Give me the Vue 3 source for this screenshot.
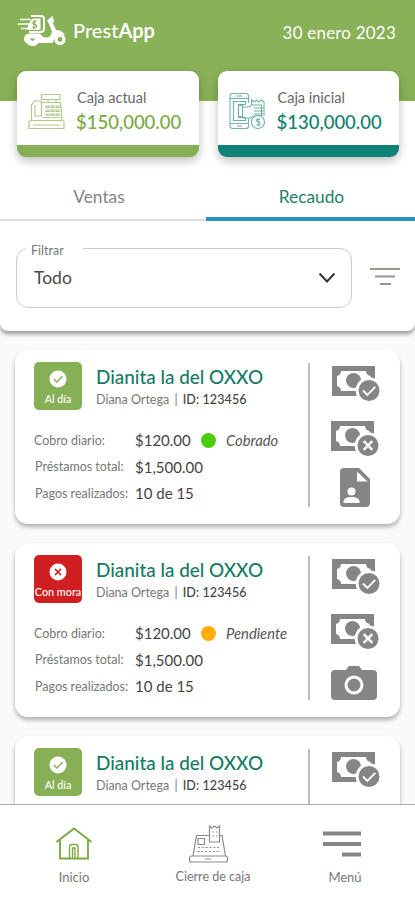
<script setup>
import { ref } from 'vue'

// Active tab and selected filter
const activeTab = ref('Recaudo')
const filter = ref('Todo')

// Clients shown in the list
// A client without rows is only peeking out above the bottom bar
const clients = ref([
  { key: 1, late: false, badge: 'Al día', status: 'Cobrado', action: 'file', rows: true },
  { key: 2, late: true, badge: 'Con mora', status: 'Pendiente', action: 'camera', rows: true },
  { key: 3, late: false, badge: 'Al día', status: 'Cobrado', action: 'file', rows: false }
])
</script>

<template>
  <div class="app">
    <!-- Green header -->
    <header class="header">
      <div class="brand">
        <svg class="scooter" width="50" height="34" viewBox="0 0 50 34" fill="none" stroke="#fff">
          <path d="M3 6.500h11M1 11h11M4 15.500h8" stroke-width="1.600" />
          <path d="M14 3h10q3 0 3 3v10q0 3-3 3H12" stroke-width="1.800" />
          <path d="M16 5.500h7.500v11.500H10.500q0-7 5.500-11.500z" fill="#fff" stroke="none" />
          <path d="M19.300 8.500q-3-1-3.300 1t2 2.200 1.200 2.500q-1.300 1-3.500 0M18 7l-1.500 9" stroke="#87b056" stroke-width="1.200" />
          <path d="M30 7.500l5.500-4.500 1.500 5-1 2 3 7q6 0 9 5l-5-.500q-6 1-7 8.500H9q-3-3-1.500-6.500Q9 20.500 13 20.500h9q2 0 3 2.500 1 1.500 4 1.500 4 0 5-3l1-3-3.500-8.500z" fill="#fff" stroke="none" />
          <path d="M10.500 28a5 3.600 0 0 0 10 0" stroke-width="3" />
          <path d="M12.500 25.500h6l-3 2.700z" fill="#87b056" stroke="none" />
          <circle cx="43" cy="26.500" r="4" fill="#87b056" stroke-width="3.200" />
        </svg>
        <h1 class="name">Prest<b>App</b></h1>
      </div>
      <span class="date">30 enero 2023</span>
    </header>

    <!-- Cash summary -->
    <section class="summary">
      <div class="cash green">
        <svg width="37" height="37" viewBox="0 0 37 37" fill="none" stroke="currentColor" stroke-width="1.200">
          <path d="M13.500 1.500h18.500v5h-18.500zM20 6.500v3M28 6.500v3" />
          <path d="M13 9.500h19.500l1.500 18H3.500V12l3-4h6.500z" />
          <path d="M7 12v11h6.500V9.500M15 24.500h17" />
          <path d="M18 13h3v1.500h-3zM23 13h3v1.500h-3zM28 13h3v1.500h-3zM18 17h3v1.500h-3zM23 17h3v1.500h-3zM28 17h3v1.500h-3zM18 21h3v1.500h-3zM23 21h3v1.500h-3zM28 21h3v1.500h-3z" />
          <path d="M1 29.500q0-2 2-2h31q2 0 2 2v6H1zM5 32h27" />
        </svg>
        <div>
          <p class="cash-label">Caja actual</p>
          <p class="cash-value">$150,000.00</p>
        </div>
      </div>
      <div class="cash teal">
        <svg width="37" height="37" viewBox="0 0 37 37" fill="none" stroke="currentColor" stroke-width="1.100">
          <path d="M19.500 10V3q0-2.500-2.500-2.500H3.500Q1 .500 1 3v30q0 2.500 2.500 2.500H17q2.500 0 2.500-2.500v-7" />
          <path d="M1 5.500h18.500M1 30.500h18.500M7 3h6M8 33h5M4.500 8.500h12v3h-7v13h7v3h-12z" />
          <path d="M9.500 12.500h4v11h-4zM13.500 14h6l4-2h9v11h-8l-3 2h-8" />
          <path d="M22.500 12V7l2.500 2 2.500-2 2.500 2 2.500-2 2.500 2v14M25 15h9M25 18h9M25 21h9" />
          <circle cx="29" cy="29" r="6.500" fill="#fff" />
          <path d="M31 26.500q-3.500-1-3.500.700t2 1.500 1.500 2.300-3.500.700M29.200 25v8" />
        </svg>
        <div>
          <p class="cash-label">Caja inicial</p>
          <p class="cash-value">$130,000.00</p>
        </div>
      </div>
    </section>

    <!-- Tabs and filter -->
    <section class="panel">
      <nav class="tabs">
        <a class="tab" :class="{ active: activeTab === 'Ventas' }" @click="activeTab = 'Ventas'">Ventas</a>
        <a class="tab" :class="{ active: activeTab === 'Recaudo' }" @click="activeTab = 'Recaudo'">Recaudo</a>
      </nav>
      <div class="filter-row">
        <div class="select">
          <span class="legend">Filtrar</span>
          <span class="selected">{{ filter }}</span>
          <svg width="18" height="12" viewBox="0 0 18 12" fill="none" stroke="#333" stroke-width="2">
            <path d="M1.500 1.500l7.500 8 7.500-8" />
          </svg>
        </div>
        <svg width="30" height="20" viewBox="0 0 30 20" fill="none" stroke="#999792" stroke-width="2">
          <path d="M0 1h30M5 8.500h20M10 16h11" />
        </svg>
      </div>
    </section>

    <!-- Client list -->
    <main class="list">
      <article v-for="client in clients" :key="client.key" class="card">
        <div class="info">
          <div class="top">
            <div class="badge" :class="{ late: client.late }">
              <svg width="18" height="18" viewBox="0 0 18 18" fill="none" stroke-width="1.500">
                <circle cx="9" cy="9" r="8.500" fill="#fff" />
                <path v-if="client.late" d="M6 6l6 6M12 6l-6 6" stroke="#d11e20" stroke-width="1.700" />
                <path v-else d="M4.800 9l3 3 5.700-5.700" stroke="#87b056" />
              </svg>
              <span>{{ client.badge }}</span>
            </div>
            <div>
              <h2 class="title">Dianita la del OXXO</h2>
              <p class="sub">Diana Ortega <i>|</i> <b>ID: 123456</b></p>
            </div>
          </div>
          <div v-if="client.rows" class="rows">
            <span class="label first">Cobro diario:</span>
            <span class="value">$120.00</span>
            <span class="status"><i class="dot" :class="{ pending: client.late }"></i>{{ client.status }}</span>
            <span class="label">Préstamos total:</span>
            <span class="value wide">$1,500.00</span>
            <span class="label">Pagos realizados:</span>
            <span class="value wide">10 de 15</span>
          </div>
        </div>
        <div class="actions">
          <!-- Bills with a check or a cross -->
          <svg v-for="kind in ['ok', 'no']" :key="kind" class="bill" :class="kind" width="49" height="37" viewBox="0 0 49 37">
            <path d="M0 0h43v30H0z" fill="#858585" />
            <path d="M9 5h25q0 4 4.500 5v10q-4.500 1-4.500 5H9q0-4-4-5V10q4-1 4-5z" fill="#fff" />
            <circle cx="21.500" cy="14.500" r="7.500" fill="#858585" />
            <circle cx="37" cy="24.500" r="13.300" fill="#fff" />
            <circle cx="37" cy="24.500" r="10.500" fill="#858585" />
            <path v-if="kind === 'ok'" d="M31 24.500l4.300 4.300 8-8" fill="none" stroke="#fff" stroke-width="1.900" />
            <path v-else d="M32.700 20.200l8.600 8.600M41.300 20.200l-8.600 8.600" fill="none" stroke="#fff" stroke-width="2.400" />
          </svg>
          <svg v-if="client.action === 'file'" class="file" width="30" height="39" viewBox="0 0 30 39">
            <path d="M4 0h15l11 11v24q0 4-4 4H4q-4 0-4-4V4q0-4 4-4z" fill="#858585" />
            <path d="M17 3.500v10h10.500z" fill="#fff" />
            <circle cx="11.500" cy="23.500" r="4" fill="#fff" />
            <path d="M3.500 35v-2q1-4 8-4t8 4v2z" fill="#fff" />
          </svg>
          <svg v-else class="camera" width="46" height="34" viewBox="0 0 46 34">
            <path d="M4 4h11l3-4h10l3 4h11q4 0 4 4v22q0 4-4 4H4q-4 0-4-4V8q0-4 4-4z" fill="#858585" />
            <circle cx="23" cy="19" r="8" fill="#858585" stroke="#fff" stroke-width="3" />
          </svg>
        </div>
      </article>
    </main>

    <!-- Bottom navigation -->
    <nav class="bottom">
      <a class="item">
        <svg width="38" height="36" viewBox="0 0 38 36" fill="none" stroke="#7daa45" stroke-width="1.900">
          <path d="M1.500 16L19 2.500 36.500 16" />
          <path d="M5 14v18.500h28V14" />
          <path d="M14.500 32V21q0-2.500 2.500-2.500h3.500q2.500 0 2.500 2.500v11M17.500 32V22h2.500v10" stroke-width="1.400" />
        </svg>
        <span>Inicio</span>
      </a>
      <a class="item">
        <svg class="register" width="39" height="38" viewBox="0 0 39 38" fill="none" stroke="#8c8c8c" stroke-width="1.200">
          <path d="M20.500 10.500H7.500L4 31M31 10.500h2L36.500 31" />
          <path d="M20.500 17V1l2.500 2 2.500-2 2.500 2 2.500-2v16zM23.500 7h1.500M27 7h1.500M23.500 11h1.500M27 11h1.500" />
          <path d="M9 13.500h6.500v6H9z" />
          <path d="M9 22.500h22M8.500 26.500h23" stroke-dasharray="2 1.800" />
          <path d="M2.500 31h34q2 0 2 2v2q0 2-2 2h-34q-2 0-2-2v-2q0-2 2-2zM16 34h6" />
        </svg>
        <span class="small">Cierre de caja</span>
      </a>
      <a class="item">
        <svg class="menu" width="38" height="36" viewBox="0 0 38 36" stroke="#858585" stroke-width="3.800">
          <path d="M0 7.500h38M0 18h38M19 28.500h19" />
        </svg>
        <span>Menú</span>
      </a>
    </nav>
  </div>
</template>

<style>
body {
  margin: 0;
}
</style>

<style scoped>
.app {
  display: flex;
  flex-direction: column;
  width: 415px;
  height: 900px;
  overflow: hidden;
  background: #fafafa;
  font-family: Lato, "Liberation Sans", sans-serif;
  color: #444;
}

p,
h1,
h2 {
  margin: 0;
}

svg {
  display: block;
  flex: none;
}

/* Header */
.header {
  display: flex;
  justify-content: space-between;
  box-sizing: border-box;
  flex: none;
  height: 101px;
  padding: 13px 19px 0 17px;
  background: #89b157;
  color: #fff;
  z-index: 1;
}

.brand {
  display: flex;
  gap: 6px;
  height: 34px;
}

.name {
  font-size: 20px;
  line-height: 35px;
  font-weight: 500;
}

.name b {
  font-weight: 700;
}

.date {
  font-size: 17px;
  line-height: 40px;
  letter-spacing: 0.2px;
}

/* Cash cards, pulled up over the header */
.summary {
  display: flex;
  flex: none;
  gap: 19px;
  height: 86px;
  margin-top: -30px;
  padding: 0 16px 0 17px;
  z-index: 2;
}

.cash {
  display: flex;
  flex: 1;
  gap: 12px;
  box-sizing: border-box;
  padding: 18px 0 0 11px;
  border-bottom: 12px solid;
  border-radius: 9px;
  background: #fff;
  box-shadow: 0 4px 10px rgba(0, 0, 0, 0.25);
}

.cash svg {
  margin-top: 4px;
  opacity: 0.6;
}

.cash.green {
  color: #7ba83f;
  border-color: #87b056;
}

.cash.teal {
  color: #10806f;
  border-color: #0d8276;
}

.cash-label {
  font-size: 14.5px;
  line-height: 17px;
  color: #666;
}

.cash-value {
  margin-top: 5px;
  margin-left: -1px;
  font-size: 18.500px;
  line-height: 22px;
  font-weight: 500;
}

/* Tabs and filter panel */
.panel {
  flex: none;
  box-sizing: border-box;
  height: 230px;
  margin-top: -56px;
  padding-top: 56px;
  border-radius: 0 0 8px 8px;
  background: #fff;
  box-shadow: 0 3px 4px rgba(0, 0, 0, 0.4);
}

.tabs {
  display: grid;
  grid-template-columns: 206px 209px;
}

.tab {
  box-sizing: border-box;
  height: 64px;
  padding-top: 30px;
  padding-right: 8px;
  border-bottom: 2px solid #dedede;
  text-align: center;
  font-size: 17.3px;
  line-height: 20px;
  color: #858585;
}

.tab.active {
  padding-right: 0;
  padding-left: 2px;
  border-bottom: 4px solid #2595bd;
  color: #1f8068;
}

.filter-row {
  display: flex;
  align-items: center;
  gap: 18px;
  padding: 27px 0 0 16px;
}

.select {
  position: relative;
  display: flex;
  justify-content: space-between;
  align-items: center;
  box-sizing: border-box;
  width: 336px;
  height: 60px;
  padding: 0 15px 0 18px;
  border: 1px solid #ccc;
  border-radius: 12px;
}

/* Label that cuts the top border */
.legend {
  position: absolute;
  top: -7px;
  left: 9px;
  width: 52px;
  padding-left: 5px;
  background: #fff;
  font-size: 12.5px;
  line-height: 17px;
  color: #777;
}

.selected {
  margin: -2px 0 0 -1px;
  font-size: 17.5px;
  color: #4a4a4a;
}

/* Client cards */
.list {
  display: flex;
  flex: 1;
  flex-direction: column;
  gap: 19px;
  min-height: 0;
  overflow: hidden;
  padding: 19px 15px 0;
}

.card {
  display: flex;
  flex: none;
  box-sizing: border-box;
  height: 174px;
  padding: 12px 0 0 19px;
  border-radius: 13px;
  background: #fff;
  box-shadow: 0 3px 4px rgba(0, 0, 0, 0.3);
}

.info {
  box-sizing: border-box;
  width: 276px;
  height: 144px;
  margin-top: 1px;
  border-right: 2px solid #bdbdbd;
}

.top {
  display: flex;
  gap: 14px;
  margin-top: -1px;
}

.badge {
  display: flex;
  flex-direction: column;
  align-items: center;
  box-sizing: border-box;
  width: 48px;
  height: 48px;
  padding-top: 8px;
  border-radius: 5px;
  background: #87b056;
  color: #fff;
  font-size: 10.8px;
  line-height: 13px;
  font-weight: 500;
  white-space: nowrap;
}

.badge span {
  margin-top: 4px;
}

.badge.late {
  background: #d11e20;
}

.title {
  margin-top: 3px;
  font-size: 18.900px;
  line-height: 24px;
  font-weight: 500;
  color: #147a66;
}

.sub {
  margin-top: 2px;
  font-size: 12.5px;
  line-height: 17px;
  color: #777;
}

.sub i {
  margin: 0 2px;
  font-style: normal;
}

.sub b {
  font-weight: 500;
  letter-spacing: 0.1px;
  color: #444;
}

.rows {
  display: grid;
  grid-template-columns: 101px 66px 1fr;
  grid-auto-rows: 26.5px;
  align-items: center;
  margin-top: 17px;
}

.label {
  padding-left: 1px;
  font-size: 12.5px;
  color: #777;
}

.label.first {
  padding-left: 0;
}

.value {
  font-size: 15px;
}

.value.wide {
  grid-column: 2 / 4;
}

.status {
  display: flex;
  align-items: center;
  gap: 10px;
  font-size: 14.8px;
  font-style: italic;
  color: #555;
}

.dot {
  width: 15px;
  height: 15px;
  border-radius: 50%;
  background: #4ccc08;
}

.dot.pending {
  background: #ffae0c;
}

/* Action icons */
.actions {
  display: flex;
  flex-direction: column;
  padding: 4px 0 0 22px;
}

.bill.no {
  margin: 18px 0 0 -1px;
}

.file {
  margin: 10px 0 0 8px;
}

.camera {
  margin: 15px 0 0 -1px;
}

/* Bottom navigation */
.bottom {
  display: grid;
  flex: none;
  grid-template-columns: 148px 130px 134px;
  box-sizing: border-box;
  height: 96px;
  border-top: 1px solid #aaa;
  background: #fff;
  z-index: 3;
}

.item {
  display: flex;
  flex-direction: column;
  align-items: center;
  padding-top: 20px;
  font-size: 13px;
  line-height: 16px;
  color: #777;
}

.item svg {
  height: 38px;
}

.item .register {
  margin-right: 10px;
}

.item .menu {
  margin-right: 7px;
}

.item span {
  margin-top: 6px;
}

.item .small {
  font-size: 12.5px;
}
</style>
